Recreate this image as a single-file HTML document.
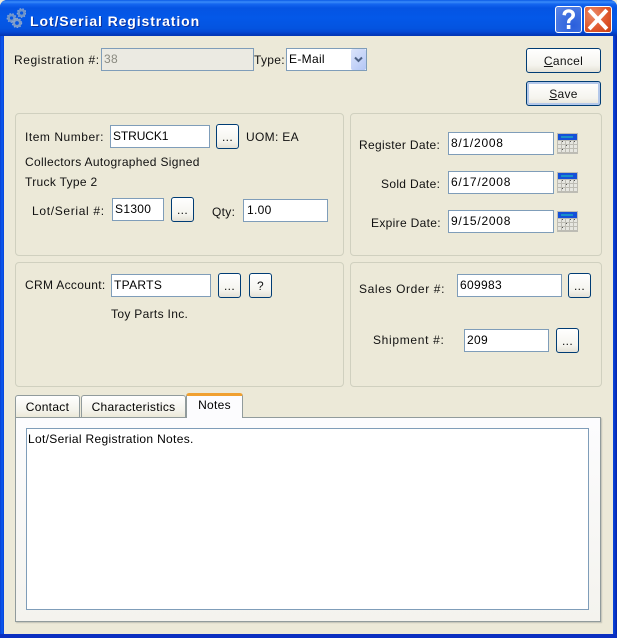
<!DOCTYPE html>
<html><head><meta charset="utf-8"><title>Lot/Serial Registration</title>
<style>
html,body{margin:0;padding:0;background:#ece9d8}
body{width:617px;height:638px;position:relative;overflow:hidden;font:12px "Liberation Sans",sans-serif;color:#000}
div,span{position:absolute;box-sizing:border-box}
#win{left:0;top:0;width:617px;height:638px;background:#0438c8;border-radius:7px 7px 0 0}
#leftb{left:0;top:30px;width:4px;height:608px;background:linear-gradient(90deg,#0a3fd0,#0a5af0 2px,#0842d8)}
#bottom{left:0;top:634px;width:617px;height:4px;background:#0a2fc0}
#rightb{left:613px;top:30px;width:4px;height:608px;background:linear-gradient(90deg,#0a48dc,#0735c8 2px,#0525a8)}
#tb{left:0;top:0;width:617px;height:36px;border-radius:7px 7px 0 0;background:linear-gradient(180deg,#0a5ae6 0,#3a8bfa 2px,#1566f0 4px,#0554e3 8px,#0458e8 18px,#0454e0 28px,#0448d4 32px,#0338b8 35px,#0335b5 36px)}
#c{left:4px;top:36px;width:609px;height:598px;background:#ece9d8}
.t{white-space:nowrap;line-height:14px;height:14px;letter-spacing:.32px;color:#111}
.i{background:#fff;border:1px solid #7f9db9;line-height:21px;padding-left:2px;letter-spacing:.32px;white-space:nowrap}
.g{border:1px solid #d0d0bf;border-radius:4px;background:#ece9d8}
.b{border:1px solid #003c74;border-radius:3px;background:linear-gradient(180deg,#fff 0,#f5f4ee 70%,#e4e1d6 100%);text-align:center;line-height:24px;letter-spacing:.3px;color:#111}
.e{line-height:25px}
.tab{border:1px solid #919b9c;border-bottom:0;border-radius:3px 3px 0 0;background:linear-gradient(180deg,#fff,#f3f2ea 70%,#ece9d8);text-align:center;line-height:23px;letter-spacing:.3px}
.d{letter-spacing:.75px}
</style></head><body>
<div id="win"></div>
<div id="c"></div>
<div id="leftb"></div>
<div id="rightb"></div>
<div id="bottom"></div>
<div id="tb"></div>
<svg style="position:absolute;left:6px;top:8px" width="20" height="20" viewBox="0 0 20 20"><g fill="none" stroke="#6f94c8" stroke-width="2.6"><circle cx="5.5" cy="10" r="2.9"/><circle cx="15.6" cy="5" r="2.9"/><circle cx="11" cy="15" r="3.2" stroke="#7d9cc6"/></g><g fill="none" stroke="#8aa6d2" stroke-width="1.2" stroke-dasharray="1.5 1.5"><circle cx="5.5" cy="10" r="4.3"/><circle cx="15.6" cy="5" r="4.3"/><circle cx="11" cy="15" r="4.6"/></g></svg>
<div style="left:30px;top:12px;height:18px;line-height:18px;color:#fff;font-weight:bold;font-size:14px;letter-spacing:.9px;white-space:nowrap;text-shadow:1px 1px 0 #0a2f9c">Lot/Serial Registration</div>
<div style="left:555px;top:6px;width:27px;height:27px;border:1px solid #fff;border-radius:3px;background:radial-gradient(circle at 70% 75%,#2a5fdc,#3f70e0 50%,#5d86e6);overflow:hidden"></div>
<svg style="position:absolute;left:555px;top:6px" width="27" height="27" viewBox="0 0 27 27"><path d="M7.5 9C7.5 5.2 10.3 3.2 13.7 3.2S20 5.2 20 8.8c0 2.8-1.6 3.9-3.1 5-1.3 1-1.6 1.6-1.6 3.4H12c0-2.9.8-4 2.3-5.2 1.4-1.1 2.1-1.7 2.1-3.1 0-1.4-1-2.3-2.7-2.3-1.6 0-2.7 1-2.8 2.9z" fill="#fff"/><rect x="11.8" y="19" width="3.6" height="4" fill="#fff"/></svg>
<div style="left:584px;top:6px;width:28px;height:27px;border:1px solid #fff;border-radius:3px;background:radial-gradient(circle at 30% 30%,#ea8a66,#e0582e 55%,#c73f14)"></div>
<svg style="position:absolute;left:584px;top:6px" width="28" height="27" viewBox="0 0 28 27"><path d="M6.5 5.5L21.5 21.5M21.5 5.5L6.5 21.5" stroke="#fff" stroke-width="4" stroke-linecap="square" fill="none"/></svg>

<span class="t" style="left:14px;top:53px;letter-spacing:.55px">Registration #:</span>
<div class="i" style="left:101px;top:48px;width:153px;height:23px;background:#ebeae2;color:#8a8a80">38</div>
<span class="t" style="left:254px;top:53px">Type:</span>
<div class="i" style="left:286px;top:48px;width:81px;height:23px">E-Mail</div>
<div style="left:351px;top:49px;width:15px;height:21px;background:linear-gradient(135deg,#dbe4fb,#b3c6f5);border-radius:2px"></div>
<svg style="position:absolute;left:351px;top:49px" width="15" height="21"><path d="M4 8.5L7.5 12 11 8.5" fill="none" stroke="#4d6185" stroke-width="2"/></svg>

<div class="b" style="left:526px;top:48px;width:75px;height:25px"><u>C</u>ancel</div>
<div class="b" style="left:526px;top:81px;width:75px;height:25px;box-shadow:inset 0 0 0 2px #b4c8ea"><u>S</u>ave</div>

<div class="g" style="left:15px;top:113px;width:329px;height:143px"></div>
<div class="g" style="left:350px;top:113px;width:252px;height:143px"></div>
<div class="g" style="left:15px;top:262px;width:329px;height:125px"></div>
<div class="g" style="left:350px;top:262px;width:252px;height:125px"></div>

<span class="t" style="left:25px;top:130px;letter-spacing:.53px">Item Number:</span>
<div class="i" style="left:110px;top:125px;width:100px;height:23px;letter-spacing:-.1px">STRUCK1</div>
<div class="b e" style="left:216px;top:124px;width:23px;height:25px">...</div>
<span class="t" style="left:246px;top:130px">UOM: EA</span>
<span class="t" style="left:25px;top:155px">Collectors Autographed Signed</span>
<span class="t" style="left:25px;top:175px">Truck Type 2</span>
<span class="t" style="left:32px;top:204px;letter-spacing:.67px">Lot/Serial #:</span>
<div class="i" style="left:112px;top:198px;width:52px;height:23px">S1300</div>
<div class="b e" style="left:171px;top:197px;width:23px;height:25px">...</div>
<span class="t" style="left:212px;top:205px">Qty:</span>
<div class="i" style="left:243px;top:199px;width:85px;height:23px;padding-left:3px">1.00</div>

<span class="t" style="left:359px;top:138px">Register Date:</span>
<div class="i d" style="left:448px;top:132px;width:106px;height:23px">8/1/2008</div>
<span class="t" style="left:381px;top:177px">Sold Date:</span>
<div class="i d" style="left:448px;top:171px;width:106px;height:23px">6/17/2008</div>
<span class="t" style="left:371px;top:216px">Expire Date:</span>
<div class="i d" style="left:448px;top:210px;width:106px;height:23px">9/15/2008</div>

<svg style="position:absolute;left:557px;top:133px" width="21" height="21" viewBox="0 0 21 21"><rect width="21" height="21" fill="#bdbcb4"/><rect x="1" y="1" width="19" height="6" fill="#1550d8"/><rect x="4" y="3" width="12" height="2" fill="#1a90c8"/><g fill="#e6e6e0"><rect x="1" y="8" width="3" height="3"/><rect x="5" y="8" width="3" height="3"/><rect x="9" y="8" width="3" height="3"/><rect x="13" y="8" width="3" height="3"/><rect x="17" y="8" width="3" height="3"/><rect x="1" y="12" width="3" height="3"/><rect x="5" y="12" width="3" height="3"/><rect x="9" y="12" width="3" height="3"/><rect x="13" y="12" width="3" height="3"/><rect x="17" y="12" width="3" height="3"/><rect x="1" y="16" width="3" height="3"/><rect x="5" y="16" width="3" height="3"/><rect x="9" y="16" width="3" height="3"/><rect x="13" y="16" width="3" height="3"/><rect x="17" y="16" width="3" height="3"/></g><g fill="#555"><rect x="5" y="8" width="1" height="1"/><rect x="13" y="8" width="1" height="1"/><rect x="17" y="8" width="1" height="1"/><rect x="9" y="12" width="1" height="1"/><rect x="5" y="16" width="1" height="1"/></g></svg>
<svg style="position:absolute;left:557px;top:172px" width="21" height="21" viewBox="0 0 21 21"><rect width="21" height="21" fill="#bdbcb4"/><rect x="1" y="1" width="19" height="6" fill="#1550d8"/><rect x="4" y="3" width="12" height="2" fill="#1a90c8"/><g fill="#e6e6e0"><rect x="1" y="8" width="3" height="3"/><rect x="5" y="8" width="3" height="3"/><rect x="9" y="8" width="3" height="3"/><rect x="13" y="8" width="3" height="3"/><rect x="17" y="8" width="3" height="3"/><rect x="1" y="12" width="3" height="3"/><rect x="5" y="12" width="3" height="3"/><rect x="9" y="12" width="3" height="3"/><rect x="13" y="12" width="3" height="3"/><rect x="17" y="12" width="3" height="3"/><rect x="1" y="16" width="3" height="3"/><rect x="5" y="16" width="3" height="3"/><rect x="9" y="16" width="3" height="3"/><rect x="13" y="16" width="3" height="3"/><rect x="17" y="16" width="3" height="3"/></g><g fill="#555"><rect x="5" y="8" width="1" height="1"/><rect x="13" y="8" width="1" height="1"/><rect x="17" y="8" width="1" height="1"/><rect x="9" y="12" width="1" height="1"/><rect x="5" y="16" width="1" height="1"/></g></svg>
<svg style="position:absolute;left:557px;top:211px" width="21" height="21" viewBox="0 0 21 21"><rect width="21" height="21" fill="#bdbcb4"/><rect x="1" y="1" width="19" height="6" fill="#1550d8"/><rect x="4" y="3" width="12" height="2" fill="#1a90c8"/><g fill="#e6e6e0"><rect x="1" y="8" width="3" height="3"/><rect x="5" y="8" width="3" height="3"/><rect x="9" y="8" width="3" height="3"/><rect x="13" y="8" width="3" height="3"/><rect x="17" y="8" width="3" height="3"/><rect x="1" y="12" width="3" height="3"/><rect x="5" y="12" width="3" height="3"/><rect x="9" y="12" width="3" height="3"/><rect x="13" y="12" width="3" height="3"/><rect x="17" y="12" width="3" height="3"/><rect x="1" y="16" width="3" height="3"/><rect x="5" y="16" width="3" height="3"/><rect x="9" y="16" width="3" height="3"/><rect x="13" y="16" width="3" height="3"/><rect x="17" y="16" width="3" height="3"/></g><g fill="#555"><rect x="5" y="8" width="1" height="1"/><rect x="13" y="8" width="1" height="1"/><rect x="17" y="8" width="1" height="1"/><rect x="9" y="12" width="1" height="1"/><rect x="5" y="16" width="1" height="1"/></g></svg>

<span class="t" style="left:25px;top:278px">CRM Account:</span>
<div class="i" style="left:111px;top:274px;width:100px;height:23px">TPARTS</div>
<div class="b e" style="left:218px;top:273px;width:23px;height:25px">...</div>
<div class="b e" style="left:249px;top:273px;width:23px;height:25px">?</div>
<span class="t" style="left:111px;top:307px">Toy Parts Inc.</span>

<span class="t" style="left:359px;top:282px;letter-spacing:.62px">Sales Order #:</span>
<div class="i" style="left:457px;top:274px;width:105px;height:23px">609983</div>
<div class="b e" style="left:568px;top:273px;width:23px;height:25px">...</div>
<span class="t" style="left:373px;top:333px;letter-spacing:.68px">Shipment #:</span>
<div class="i" style="left:464px;top:329px;width:85px;height:23px">209</div>
<div class="b e" style="left:556px;top:328px;width:23px;height:25px">...</div>

<div style="left:15px;top:417px;width:586px;height:205px;border:1px solid #919b9c;box-shadow:1px 1px 1px #c0c0b4;background:linear-gradient(180deg,#fcfcfe,#f4f3ee)"></div>
<div class="tab" style="left:15px;top:395px;width:65px;height:22px">Contact</div>
<div class="tab" style="left:81px;top:395px;width:105px;height:22px">Characteristics</div>
<div class="tab" style="left:186px;top:393px;width:57px;height:25px;background:#fcfcfe;border-top:3px solid #f0a030;line-height:19px;z-index:2">Notes</div>
<div class="i" style="left:26px;top:428px;width:563px;height:182px;line-height:20px;padding-left:1px">Lot/Serial Registration Notes.</div>
</body></html>
